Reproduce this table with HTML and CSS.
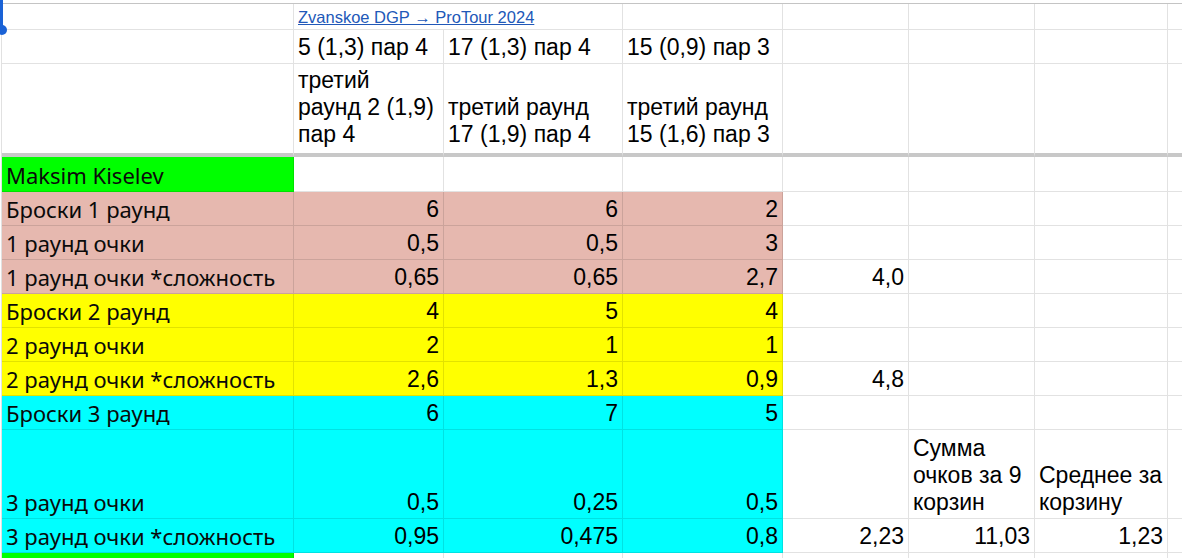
FILE: index.html
```html
<!DOCTYPE html>
<html lang="ru">
<head>
<meta charset="utf-8">
<title>Zvanskoe DGP</title>
<link rel="stylesheet" href="styles.css">
</head>
<body>
<div class="sheet">
  <div class="grid">
    <!-- row 0 -->
    <div class="c"></div>
    <div class="c span2 link-cell"><a class="link" href="#">Zvanskoe DGP → ProTour 2024</a></div>
    <div class="c"></div><div class="c"></div><div class="c"></div><div class="c"></div><div class="c"></div>
    <!-- row 1 -->
    <div class="c"></div>
    <div class="c">5 (1,3) пар 4</div>
    <div class="c">17 (1,3) пар 4</div>
    <div class="c">15 (0,9) пар 3</div>
    <div class="c"></div><div class="c"></div><div class="c"></div><div class="c"></div>
    <!-- row 2 -->
    <div class="c fz"></div>
    <div class="c fz">третий<br>раунд 2 (1,9)<br>пар 4</div>
    <div class="c fz">третий раунд<br>17 (1,9) пар 4</div>
    <div class="c fz">третий раунд<br>15 (1,6) пар 3</div>
    <div class="c fz"></div><div class="c fz"></div><div class="c fz"></div><div class="c fz"></div>
    <!-- row 3 -->
    <div class="c lbl gr">Maksim Kiselev</div>
    <div class="c"></div><div class="c"></div><div class="c"></div><div class="c"></div><div class="c"></div><div class="c"></div><div class="c"></div>
    <!-- row 4 -->
    <div class="c lbl pk">Броски 1 раунд</div>
    <div class="c r pk">6</div><div class="c r pk">6</div><div class="c r pk">2</div>
    <div class="c"></div><div class="c"></div><div class="c"></div><div class="c"></div>
    <!-- row 5 -->
    <div class="c lbl pk">1 раунд очки</div>
    <div class="c r pk">0,5</div><div class="c r pk">0,5</div><div class="c r pk">3</div>
    <div class="c"></div><div class="c"></div><div class="c"></div><div class="c"></div>
    <!-- row 6 -->
    <div class="c lbl pk">1 раунд очки *сложность</div>
    <div class="c r pk">0,65</div><div class="c r pk">0,65</div><div class="c r pk">2,7</div>
    <div class="c r">4,0</div><div class="c"></div><div class="c"></div><div class="c"></div>
    <!-- row 7 -->
    <div class="c lbl yl">Броски 2 раунд</div>
    <div class="c r yl">4</div><div class="c r yl">5</div><div class="c r yl">4</div>
    <div class="c"></div><div class="c"></div><div class="c"></div><div class="c"></div>
    <!-- row 8 -->
    <div class="c lbl yl">2 раунд очки</div>
    <div class="c r yl">2</div><div class="c r yl">1</div><div class="c r yl">1</div>
    <div class="c"></div><div class="c"></div><div class="c"></div><div class="c"></div>
    <!-- row 9 -->
    <div class="c lbl yl">2 раунд очки *сложность</div>
    <div class="c r yl">2,6</div><div class="c r yl">1,3</div><div class="c r yl">0,9</div>
    <div class="c r">4,8</div><div class="c"></div><div class="c"></div><div class="c"></div>
    <!-- row 10 -->
    <div class="c lbl cy">Броски 3 раунд</div>
    <div class="c r cy">6</div><div class="c r cy">7</div><div class="c r cy">5</div>
    <div class="c"></div><div class="c"></div><div class="c"></div><div class="c"></div>
    <!-- row 11 -->
    <div class="c lbl cy">3 раунд очки</div>
    <div class="c r cy">0,5</div><div class="c r cy">0,25</div><div class="c r cy">0,5</div>
    <div class="c"></div>
    <div class="c">Сумма<br>очков за 9<br>корзин</div>
    <div class="c">Среднее за<br>корзину</div>
    <div class="c"></div>
    <!-- row 12 -->
    <div class="c lbl cy">3 раунд очки *сложность</div>
    <div class="c r cy">0,95</div><div class="c r cy">0,475</div><div class="c r cy">0,8</div>
    <div class="c r">2,23</div><div class="c r">11,03</div><div class="c r">1,23</div><div class="c"></div>
    <!-- row 13 -->
    <div class="c lbl gr"></div>
    <div class="c"></div><div class="c"></div><div class="c"></div><div class="c"></div><div class="c"></div><div class="c"></div><div class="c"></div>
  </div>
  <div class="sel-bar"></div>
  <div class="sel-dot"></div>
</div>
</body>
</html>
```

FILE: styles.css
```css
html, body {
  margin: 0;
  padding: 0;
  background: #ffffff;
  overflow: hidden;
}

.sheet {
  position: relative;
  width: 1182px;
  height: 558px;
  overflow: hidden;
  padding-top: 3px;
  box-sizing: border-box;
}

.grid {
  display: grid;
  grid-template-columns: 292px 150px 179px 160px 126px 126px 133px 100px;
  grid-template-rows: 26px 34px 93px 35px repeat(7, 34px) 89px 34px 34px;
  margin-left: 1px;
  border-left: 1px solid #e1e1e1;
  border-top: 1px solid #c4c4c4;
  width: max-content;
  font-family: "Liberation Sans", Arial, sans-serif;
  font-size: 23px;
  line-height: 27px;
  color: #000;
}

.c {
  box-sizing: border-box;
  border-right: 1px solid rgba(0, 0, 0, 0.115);
  border-bottom: 1px solid rgba(0, 0, 0, 0.115);
  display: flex;
  flex-direction: column;
  justify-content: flex-end;
  align-items: flex-start;
  padding: 0 4px 2px 4px;
  white-space: nowrap;
  overflow: hidden;
}

.span2 {
  grid-column: span 2;
}

.link-cell {
  padding-bottom: 3px;
  font-size: 16.5px;
  line-height: 18px;
}

.link {
  color: #2158b8;
  text-decoration: underline;
}

.fz {
  border-bottom: 4px solid #c8c8c8;
  padding-bottom: 5px;
}

.r {
  align-items: flex-end;
  text-align: right;
}

.lbl {
  font-family: "Noto Sans", "Open Sans", sans-serif;
  font-size: 22px;
  line-height: 27px;
  padding-left: 4px;
  color: #0a0a0a;
}

.gr { background: #00ff00; }
.pk { background: #e6b8af; }
.yl { background: #ffff00; }
.cy { background: #00ffff; }

.sel-bar {
  position: absolute;
  left: 0;
  top: 0;
  width: 3px;
  height: 29px;
  background: #1a62d6;
}

.sel-dot {
  position: absolute;
  left: -3px;
  top: 25px;
  width: 10px;
  height: 10px;
  border-radius: 50%;
  background: #1a62d6;
}
```
